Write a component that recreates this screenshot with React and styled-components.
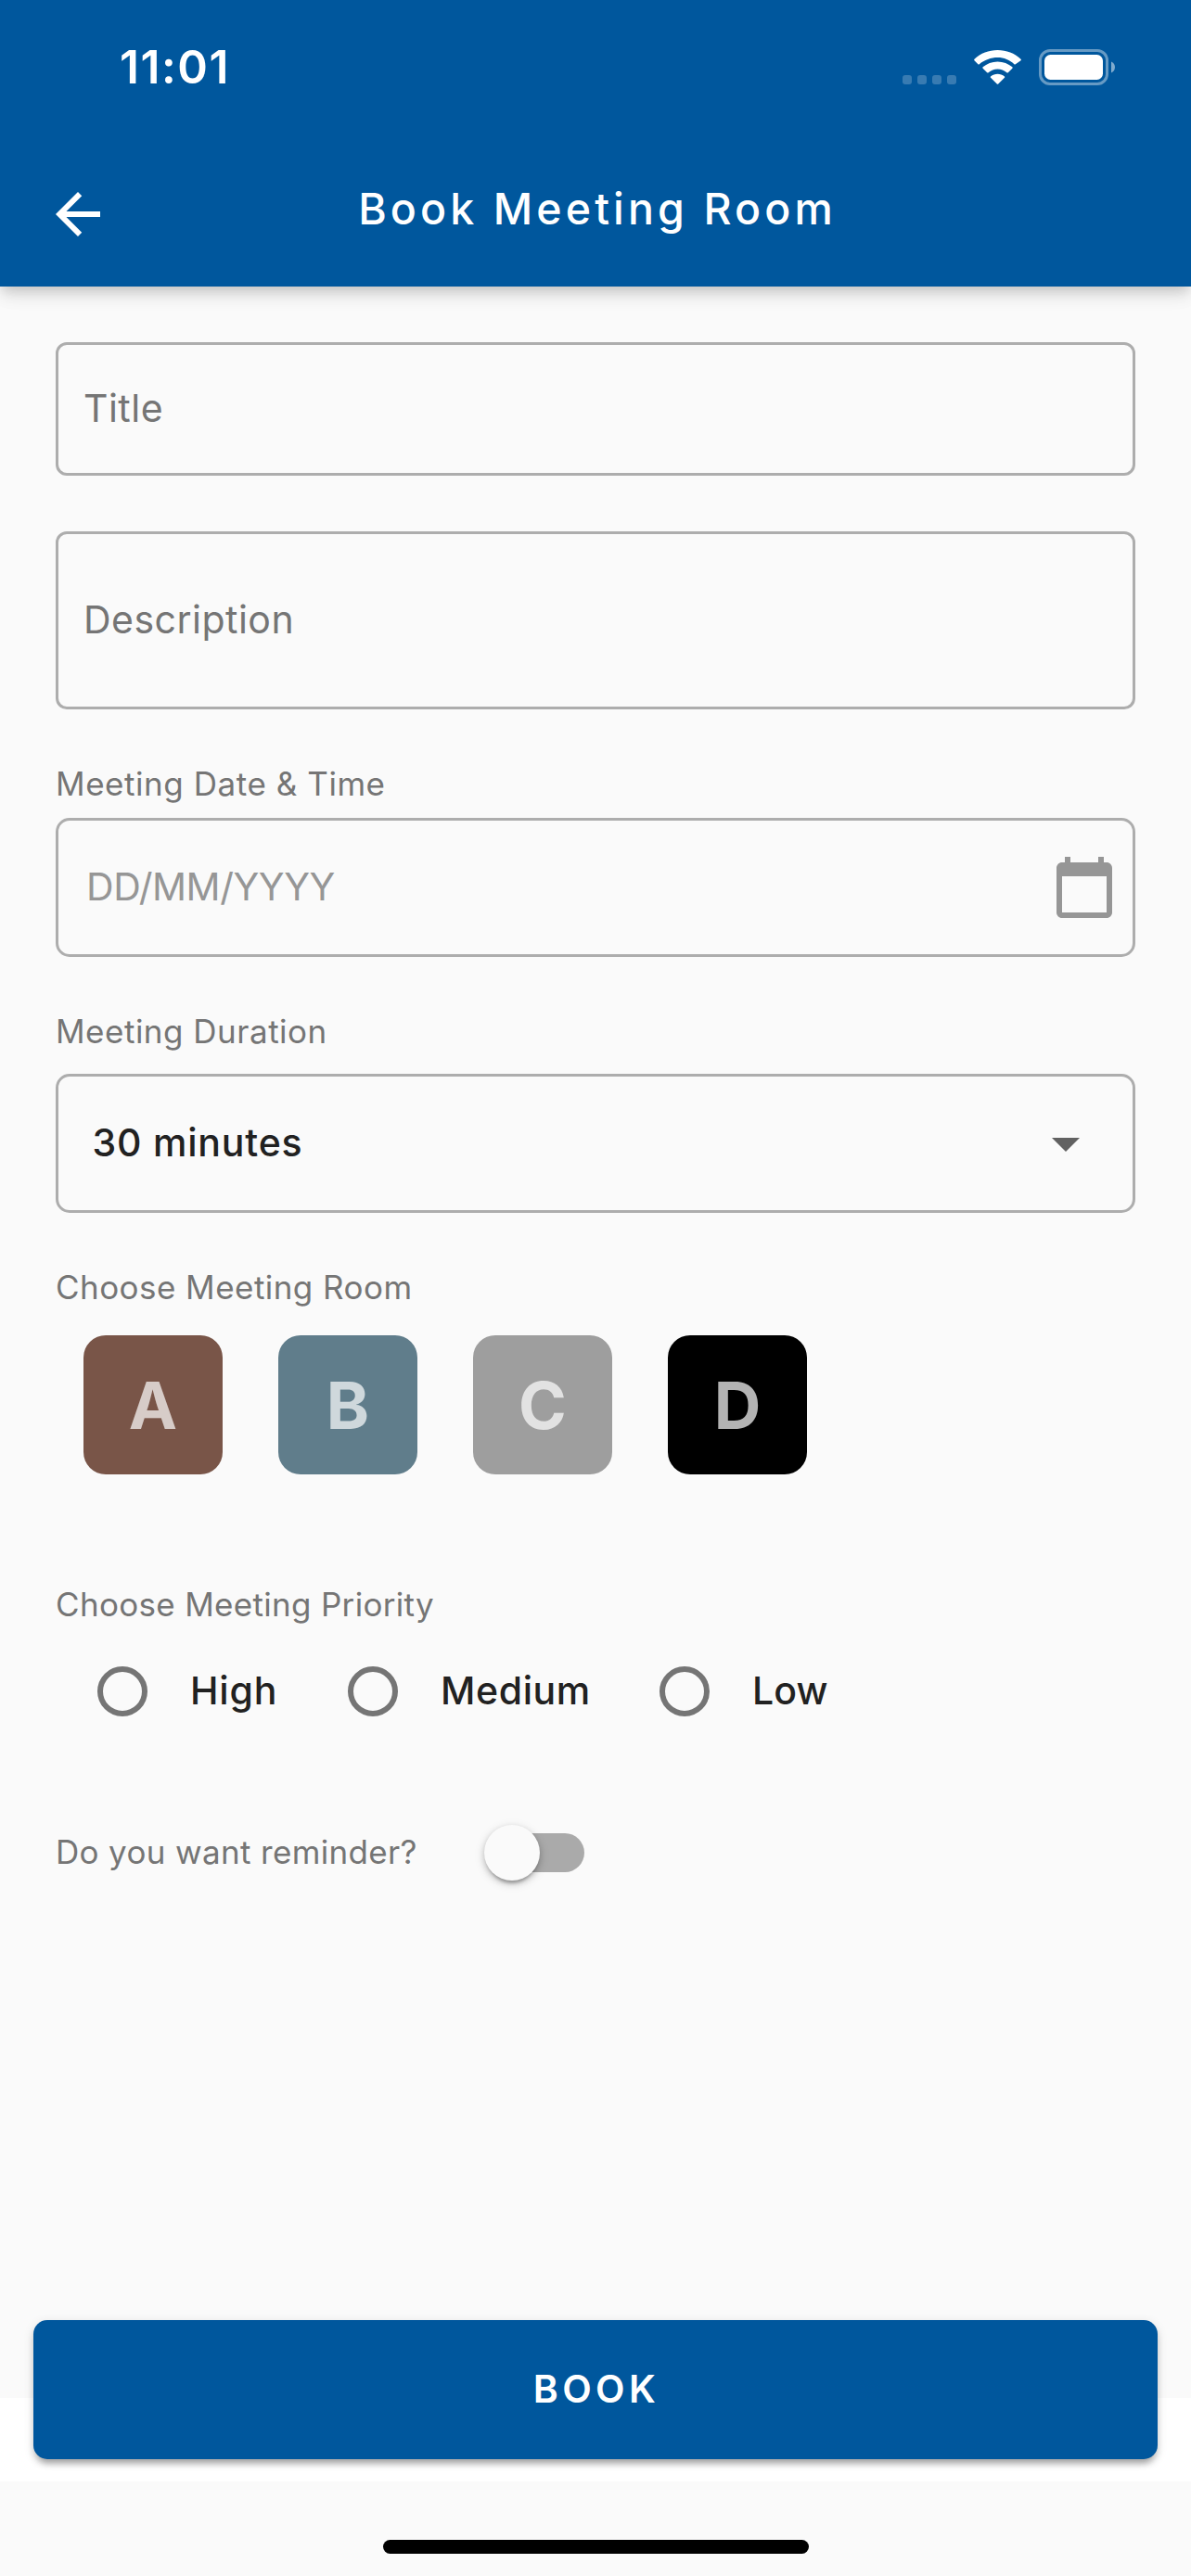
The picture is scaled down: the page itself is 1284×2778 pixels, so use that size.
import React, { useState } from "react";
import styled, { createGlobalStyle } from "styled-components";

const GlobalStyle = createGlobalStyle`
  *, *::before, *::after { box-sizing: border-box; }
  html, body { margin: 0; padding: 0; background: #fafafa; }
  body { font-family: Inter, Roboto, "Liberation Sans", sans-serif; color: #212121; }
  button { font: inherit; border: 0; padding: 0; background: none; }
`;

const Screen = styled.div`
  width: 1284px;
  height: 2778px;
  display: flex;
  flex-direction: column;
  background: #fafafa;
  overflow: hidden;
`;

const Header = styled.header`
  height: 309px;
  flex: none;
  background: #00579d;
  color: #fff;
  box-shadow: 0 6px 12px -3px rgba(0, 0, 0, 0.14), 0 12px 15px rgba(0, 0, 0, 0.07), 0 3px 30px rgba(0, 0, 0, 0.06);
`;

const StatusBar = styled.div`
  height: 146px;
  padding: 0 82px 1px 129px;
  display: flex;
  align-items: center;
  justify-content: space-between;
`;

const Clock = styled.span`
  font-size: 49.5px;
  font-weight: 600;
  line-height: 61px;
  letter-spacing: 1.57px;
`;

const StatusIcons = styled.div`
  display: flex;
  align-items: flex-end;
  height: 39px;
`;

const SignalDots = styled.div`
  display: flex;
  gap: 6px;
  margin: 0 19px 1px 0;
`;

const SignalDot = styled.i`
  width: 10px;
  height: 10px;
  border-radius: 3px;
  background: rgba(255, 255, 255, 0.22);
`;

const WifiIcon = styled.svg`
  width: 51px;
  height: 38px;
  margin: 0 19px 0 0;
`;

const BatteryIcon = styled.svg`
  width: 82px;
  height: 39px;
`;

const NavBar = styled.div`
  height: 158px;
  padding: 0 44px 0 48px;
  display: grid;
  grid-template-columns: 1fr auto 1fr;
  align-items: center;
`;

const BackButton = styled.button`
  width: 72px;
  height: 72px;
  margin-top: 12px;
  color: #fff;
`;

const MaterialIcon = styled.svg`
  display: block;
  width: 72px;
  height: 72px;
  fill: ${(p) => p.$color || "currentColor"};
`;

const FieldIcon = styled(MaterialIcon)`
  margin-top: 2px;
`;

const PageTitle = styled.h1`
  margin: 0;
  font-size: 46.5px;
  font-weight: 500;
  line-height: 60px;
  letter-spacing: 4.1px;
`;

const Form = styled.main`
  flex: 1;
  padding: 60px 60px 0;
  display: flex;
  flex-direction: column;
`;

const Field = styled.div`
  height: ${(p) => p.$height}px;
  padding: 0 ${(p) => p.$right || 28}px 2px ${(p) => p.$left}px;
  margin-bottom: ${(p) => p.$after || 0}px;
  border: 3px solid #adadad;
  border-radius: ${(p) => p.$radius || 15}px;
  display: flex;
  align-items: center;
  justify-content: space-between;
`;

const FieldText = styled.span`
  font-size: 41px;
  line-height: 50px;
  font-weight: ${(p) => p.$weight || 400};
  letter-spacing: ${(p) => p.$spacing || 0.48}px;
  color: ${(p) => p.$color || "#757575"};
`;

const Label = styled.div`
  font-size: 35px;
  line-height: 42px;
  letter-spacing: ${(p) => p.$spacing}px;
  color: #757575;
  margin-bottom: ${(p) => p.$after || 0}px;
`;

const Rooms = styled.div`
  display: flex;
  gap: 60px;
  padding-left: 30px;
  margin-bottom: 119px;
`;

const RoomTile = styled.button`
  width: 150px;
  height: 150px;
  padding: 1px 0 0;
  border-radius: 24px;
  background: ${(p) => p.$color};
  color: rgba(255, 255, 255, 0.7);
  font-size: 70px;
  font-weight: 700;
  line-height: 84px;
  text-align: center;
`;

const Priorities = styled.div`
  display: flex;
  align-items: center;
  height: 54px;
  padding-left: 45px;
  margin-bottom: 117px;
`;

const PriorityOption = styled.div`
  display: flex;
  align-items: center;
  width: ${(p) => p.$width}px;
  height: 54px;
  gap: 46px;
`;

const RadioCircle = styled.span`
  width: 54px;
  height: 54px;
  flex: none;
  border: 6px solid #757575;
  border-radius: 50%;
`;

const OptionText = styled(FieldText)`
  margin-bottom: 2px;
`;

const ReminderRow = styled.div`
  display: flex;
  align-items: center;
  height: 60px;
`;

const ReminderLabel = styled(Label)`
  width: 471px;
  padding-bottom: 2px;
`;

const SwitchTrack = styled.button`
  width: 99px;
  height: 42px;
  display: flex;
  align-items: center;
  background: #aaaaaa;
  border-radius: 21px;
`;

const SwitchThumb = styled.span`
  width: 60px;
  height: 60px;
  flex: none;
  margin-left: -9px;
  border-radius: 50%;
  background: #fafafa;
  box-shadow: 0 6px 3px -3px rgba(0, 0, 0, 0.2), 0 3px 6px rgba(0, 0, 0, 0.18), 0 3px 12px rgba(0, 0, 0, 0.14);
`;

const Footer = styled.div`
  flex: none;
  height: 90px;
  padding: 0 36px;
  background: #fff;
`;

const BookButton = styled.button`
  display: block;
  width: 1212px;
  height: 150px;
  margin-top: -84px;
  padding: 0 0 2px 2px;
  border-radius: 15px;
  background: #00579d;
  color: #fff;
  font-size: 41px;
  font-weight: 600;
  line-height: 50px;
  letter-spacing: 4.38px;
  box-shadow: 0 9px 6px -6px rgba(0, 0, 0, 0.2), 0 6px 6px rgba(0, 0, 0, 0.14), 0 3px 12px rgba(0, 0, 0, 0.12);
`;

const HomeArea = styled.div`
  flex: none;
  height: 102px;
  padding-top: 63px;
`;

const HomeIndicator = styled.div`
  width: 459px;
  height: 15px;
  margin: 0 auto;
  border-radius: 8px;
  background: #000;
`;

const rooms = [
  { name: "A", color: "#795548" },
  { name: "B", color: "#607d8b" },
  { name: "C", color: "#9e9e9e" },
  { name: "D", color: "#000000" },
];

const priorities = [
  { name: "High", width: 270, spacing: 0.8 },
  { name: "Medium", width: 336, spacing: 0.6 },
  { name: "Low", width: 200, spacing: 0.11 },
];

function Wifi() {
  return (
    <WifiIcon viewBox="0 0 51 38" fill="#fff">
      <path d="M25.5 8C32.4 8 38.7 10.7 43.4 15.2C43.8 15.6 44.4 15.5 44.8 15.2L50.5 11.2C51 10.8 51 10.2 50.5 9.7C43.8 3.4 35 0 25.5 0S7.2 3.4.5 9.7C0 10.2 0 10.8.5 11.2L4.4 15.2C4.8 15.6 5.4 15.6 5.8 15.2C11 10.7 18.6 8 25.5 8Z" />
      <path d="M25.5 20.4C29.2 20.4 32.7 21.8 35.4 24.2C35.8 24.6 36.4 24.6 36.8 24.2L41.4 19.7C41.8 19.3 41.8 18.7 41.4 18.3C37.1 14.5 31.5 12.4 25.5 12.4S13.9 14.5 9.6 18.3C9.2 18.7 9.2 19.3 9.6 19.7L14.2 24.2C14.6 24.6 15.2 24.6 15.6 24.2C18.3 21.8 21.8 20.4 25.5 20.4Z" />
      <path d="M33 28.4C33.4 28.8 33.4 29.3 33 29.7L26.2 36.5C25.8 36.9 25.2 36.9 24.8 36.5L18 29.7C17.6 29.3 17.6 28.8 18 28.4C22.3 24.8 28.7 24.8 33 28.4Z" />
    </WifiIcon>
  );
}

function Battery() {
  return (
    <BatteryIcon viewBox="0 0 82 39">
      <rect x="1.5" y="1.5" width="72" height="36" rx="10.5" fill="none" stroke="#fff" strokeOpacity="0.4" strokeWidth="3" />
      <rect x="6" y="6" width="63" height="27" rx="6.5" fill="#fff" />
      <path d="M78 13.5C80.4 14.4 82 16.7 82 19.5S80.4 24.6 78 25.5Z" fill="#fff" fillOpacity="0.5" />
    </BatteryIcon>
  );
}

export default function App() {
  const [room, setRoom] = useState(null);
  return (
    <>
      <GlobalStyle />
      <Screen>
        <Header>
          <StatusBar>
            <Clock>11:01</Clock>
            <StatusIcons>
              <SignalDots>
                <SignalDot />
                <SignalDot />
                <SignalDot />
                <SignalDot />
              </SignalDots>
              <Wifi />
              <Battery />
            </StatusIcons>
          </StatusBar>
          <NavBar>
            <BackButton aria-label="Back">
              <MaterialIcon viewBox="0 0 24 24">
                <path d="M20 11H7.83l5.59-5.59L12 4l-8 8 8 8 1.41-1.41L7.83 13H20v-2z" />
              </MaterialIcon>
            </BackButton>
            <PageTitle>Book Meeting Room</PageTitle>
          </NavBar>
        </Header>

        <Form>
          <Field $height={144} $left={27} $radius={12} $after={60}>
            <FieldText>Title</FieldText>
          </Field>
          <Field $height={192} $left={27} $radius={12} $after={59}>
            <FieldText>Description</FieldText>
          </Field>

          <Label $spacing={0.55} $after={16}>Meeting Date &amp; Time</Label>
          <Field $height={150} $left={30} $right={16.3} $after={59}>
            <FieldText $spacing={-0.45} $color="#969696">DD/MM/YYYY</FieldText>
            <FieldIcon viewBox="0 0 24 24" $color="#969696">
              <path d="M20 3h-1V1h-2v2H7V1H5v2H4c-1.1 0-2 .9-2 2v16c0 1.1.9 2 2 2h16c1.1 0 2-.9 2-2V5c0-1.1-.9-2-2-2zm0 18H4V8h16v13z" />
            </FieldIcon>
          </Field>

          <Label $spacing={0.5} $after={25}>Meeting Duration</Label>
          <Field $height={150} $left={36.5} $right={36} $after={59}>
            <FieldText $spacing={0.8} $weight={500} $color="#212121">30 minutes</FieldText>
            <FieldIcon viewBox="0 0 24 24" $color="#616161">
              <path d="M7 10l5 5 5-5z" />
            </FieldIcon>
          </Field>

          <Label $spacing={0.45} $after={31}>Choose Meeting Room</Label>
          <Rooms>
            {rooms.map((r) => (
              <RoomTile key={r.name} $color={r.color} aria-pressed={room === r.name} onClick={() => setRoom(r.name)}>
                {r.name}
              </RoomTile>
            ))}
          </Rooms>

          <Label $spacing={0.31} $after={46}>Choose Meeting Priority</Label>
          <Priorities>
            {priorities.map((p) => (
              <PriorityOption key={p.name} $width={p.width}>
                <RadioCircle />
                <OptionText $weight={500} $color="#212121" $spacing={p.spacing}>{p.name}</OptionText>
              </PriorityOption>
            ))}
          </Priorities>

          <ReminderRow>
            <ReminderLabel $spacing={0.34}>Do you want reminder?</ReminderLabel>
            <SwitchTrack role="switch" aria-checked="false">
              <SwitchThumb />
            </SwitchTrack>
          </ReminderRow>
        </Form>

        <Footer>
          <BookButton>BOOK</BookButton>
        </Footer>
        <HomeArea>
          <HomeIndicator />
        </HomeArea>
      </Screen>
    </>
  );
}
